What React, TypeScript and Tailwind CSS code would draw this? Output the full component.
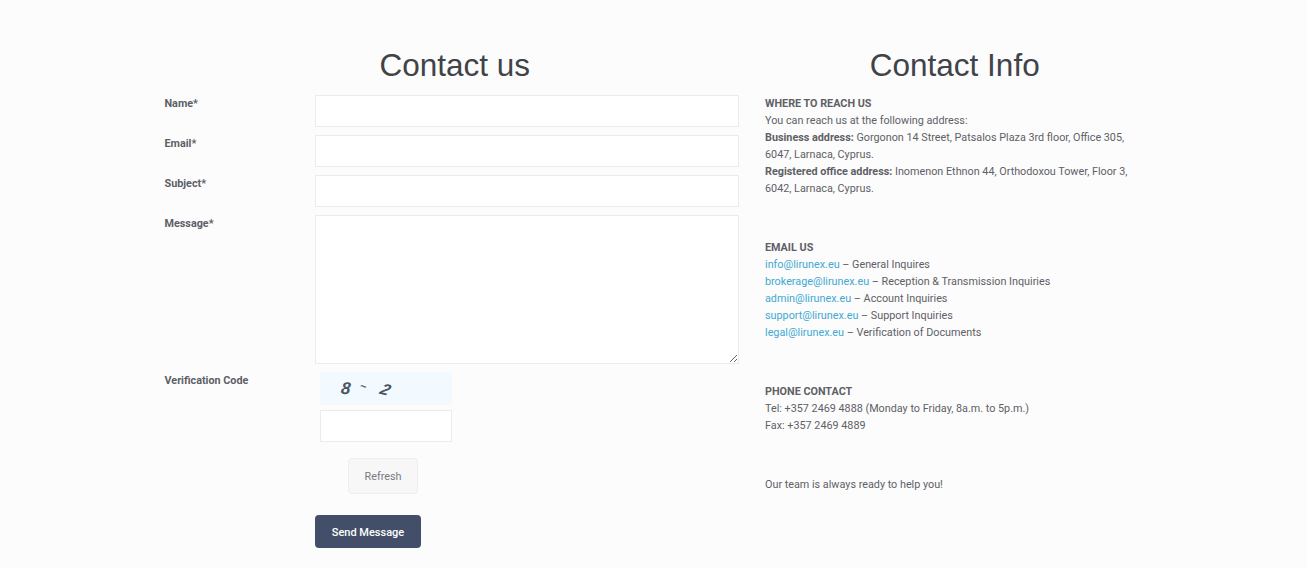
const fields = ["Name*", "Email*", "Subject*"];

const emails = [
  { address: "info@lirunex.eu", note: "General Inquires" },
  { address: "brokerage@lirunex.eu", note: "Reception & Transmission Inquiries" },
  { address: "admin@lirunex.eu", note: "Account Inquiries" },
  { address: "support@lirunex.eu", note: "Support Inquiries" },
  { address: "legal@lirunex.eu", note: "Verification of Documents" },
];

const inputClass = "block bg-white border border-[#ebebeb] outline-none";
const labelClass = "w-[161.5px] shrink-0 -mt-[0.5px] pl-[11px] font-bold text-[#5c5f66]";

export default function App() {
  return (
    <div className="min-h-[568px] bg-[#fcfcfc] font-['Roboto',sans-serif] text-[10.8px] leading-[17px] text-[#5e6066] overflow-hidden">
      <div className="mx-auto flex w-[1000px] pt-[45px]">
        {/* Formulario */}
        <div className="w-[600.5px] shrink-0">
          <h1 className="h-[50px] pl-[2px] text-center font-['Liberation_Sans',sans-serif] text-[31.5px] leading-[40px] text-[#404348]">
            Contact us
          </h1>

          {fields.map((label) => (
            <div key={label} className="mb-2 flex">
              <label className={labelClass}>{label}</label>
              <input className={`${inputClass} h-[32px] w-[424px]`} />
            </div>
          ))}

          <div className="mb-2 flex">
            <label className={labelClass}>Message*</label>
            <textarea className={`${inputClass} h-[149px] w-[424px]`} />
          </div>

          <div className="flex">
            <label className={labelClass}>Verification Code</label>
            <div className="pl-[5px]">
              <div className="flex h-[33px] w-[132px] items-center bg-[#f2faff] pb-[1px] pl-[21px] font-['Liberation_Sans',sans-serif] font-bold italic text-[#4a5562]">
                <span className="-skew-x-6 text-[17px]">8</span>
                <span className="ml-[10px] -mt-[3px] rotate-12 text-[11px]">~</span>
                <span className="ml-[14px] mt-[3px] rotate-[14deg] -skew-x-12 text-[16px]">2</span>
              </div>
              <input className={`${inputClass} mt-[5px] h-[32px] w-[132px]`} />
              <button className="mt-[16px] ml-[28px] block h-[36px] w-[70px] rounded-[4px] border border-[#eeeeee] bg-[#f7f7f7] text-[#777b80]">
                Refresh
              </button>
            </div>
          </div>

          <button className="mt-[21px] ml-[161.5px] block h-[33px] w-[106px] rounded-[4px] bg-[#434f68] pt-[1px] text-[11px] font-medium text-white">
            Send Message
          </button>
        </div>

        {/* Datos de contacto */}
        <div className="w-[399.5px] shrink-0">
          <h1 className="h-[50px] pl-[2px] text-center font-['Liberation_Sans',sans-serif] text-[31.5px] leading-[40px] text-[#404348]">
            Contact Info
          </h1>

          <div className="pl-[11px]">
            <p className="w-[375px]">
              <b>WHERE TO REACH US</b>
              <br />
              You can reach us at the following address:
              <br />
              <b>Business address:</b> Gorgonon 14 Street, Patsalos Plaza 3rd floor, Office 305, 6047, Larnaca, Cyprus.
              <br />
              <b>Registered office address:</b> Inomenon Ethnon 44, Orthodoxou Tower, Floor 3, 6042, Larnaca, Cyprus.
            </p>

            <p className="mt-[42px]">
              <b>EMAIL US</b>
              {emails.map((e) => (
                <span key={e.address} className="block">
                  <a href="#" className="text-[#41a9d2]">{e.address}</a> – {e.note}
                </span>
              ))}
            </p>

            <p className="mt-[42px]">
              <b>PHONE CONTACT</b>
              <br />
              Tel: +357 2469 4888 (Monday to Friday, 8a.m. to 5p.m.)
              <br />
              Fax: +357 2469 4889
            </p>

            <p className="mt-[42px]">Our team is always ready to help you!</p>
          </div>
        </div>
      </div>
    </div>
  );
}
